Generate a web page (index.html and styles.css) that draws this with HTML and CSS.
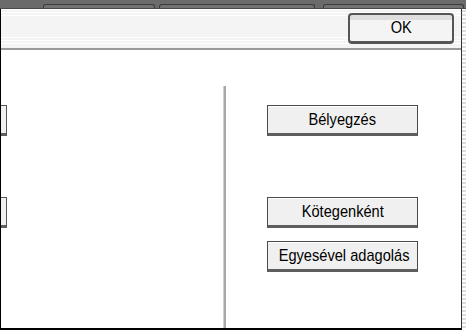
FILE: index.html
```html
<!DOCTYPE html>
<html lang="hu">
<head>
    <meta charset="UTF-8">
    <meta name="viewport" content="width=device-width, initial-scale=1.0">
    <title>Adagolás</title>
    <link rel="stylesheet" href="styles.css">
</head>
<body>
    <div class="tabs">
        <div class="tab tab-first"></div>
        <div class="tab tab-second"></div>
        <div class="tab tab-third"></div>
    </div>
    <div class="screen">
        <div class="main">
            <div class="header">
                <button class="ok-button"><span class="label">OK</span></button>
            </div>
            <div class="content">
                <div class="left-panel">
                    <div class="stub"></div>
                    <div class="stub stub-lower"></div>
                </div>
                <div class="divider"></div>
                <div class="right-panel">
                    <button class="key"><span class="label">Bélyegzés</span></button>
                    <button class="key key-lower"><span class="label">Kötegenként</span></button>
                    <button class="key key-last"><span class="label">Egyesével adagolás</span></button>
                </div>
            </div>
        </div>
        <div class="edge"></div>
    </div>
</body>
</html>
```

FILE: styles.css
```css
body {
    margin: 0;
    width: 466px;
    height: 330px;
    overflow: hidden;
    background: #ffffff;
    font-family: "Liberation Sans", Arial, sans-serif;
    color: #000;
}
.tabs {
    height: 9px;
    background: #6b6b6b;
    display: flex;
    align-items: flex-end;
    padding-left: 43px;
    box-sizing: border-box;
    border-bottom: 1px solid #4a4a4a;
}
.tab {
    height: 4px;
    background: #727272;
    border: 1px solid #3c3c3c;
    border-bottom: none;
    border-radius: 3px 3px 0 0;
    box-sizing: border-box;
}
.tab-first {
    width: 112px;
}
.tab-second {
    width: 156px;
    margin-left: 4px;
}
.tab-third {
    width: 141px;
    margin-left: 8px;
}
.screen {
    display: flex;
    height: 321px;
}
.main {
    width: 462px;
    border-left: 1px solid #000;
    border-right: 1px solid #333;
    border-bottom: 2px solid #000;
    box-sizing: border-box;
    display: flex;
    flex-direction: column;
}
.edge {
    width: 4px;
    border-top: 1px solid #fff;
    background: repeating-linear-gradient(#dcdcdc 0 2px, #ffffff 2px 4px);
}
.header {
    height: 41px;
    box-sizing: border-box;
    padding: 4px 7px 0 0;
    display: flex;
    justify-content: flex-end;
    align-items: flex-start;
    border-bottom: 2px solid #9a9a9a;
    background: linear-gradient(#ffffff 0 1px, #f4f4f4 1px 3px, #ffffff 3px 4px, #f4f4f4 4px 6px, #ffffff 6px 7px, #f4f4f4 7px 28px, #ffffff 28px 29px, #f4f4f4 29px 31px, #ffffff 31px 32px, #f4f4f4 32px 34px, #ffffff 34px 35px, #f4f4f4 35px);
}
.label {
    display: inline-block;
    font-size: 17px;
    line-height: 20px;
    transform: scaleX(0.86);
    white-space: nowrap;
}
.ok-button {
    width: 106px;
    height: 31px;
    border: 2px solid #555;
    border-bottom-width: 3px;
    border-radius: 4px;
    background: linear-gradient(#dedede 0 5px, #f4f4f4 5px);
    font-family: inherit;
    color: #000;
    padding: 0;
}
.content {
    flex: 1;
    display: flex;
    background: #fff;
}
.left-panel {
    width: 222px;
    padding-top: 55px;
    box-sizing: border-box;
}
.stub {
    width: 6px;
    height: 31px;
    box-sizing: border-box;
    background: #f0f0f0;
    border-top: 1px solid #555;
    border-right: 1px solid #555;
    border-bottom: 3px solid #5e5e5e;
}
.stub-lower {
    margin-top: 61px;
}
.divider {
    width: 2px;
    margin-top: 36px;
    background: #a8a8a8;
    border-left: 1px solid #d0d0d0;
}
.right-panel {
    padding: 55px 0 0 41px;
    display: flex;
    flex-direction: column;
    align-items: flex-start;
}
.key {
    width: 151px;
    height: 31px;
    box-sizing: border-box;
    border: 1px solid #4a4a4a;
    border-bottom: 3px solid #5e5e5e;
    background: #f0f0f0;
    box-shadow: inset 0 1px 0 #ffffff;
    font-family: inherit;
    color: #000;
    padding: 0;
}
.key-lower {
    margin-top: 61px;
}
.key-last {
    margin-top: 13px;
}
```
